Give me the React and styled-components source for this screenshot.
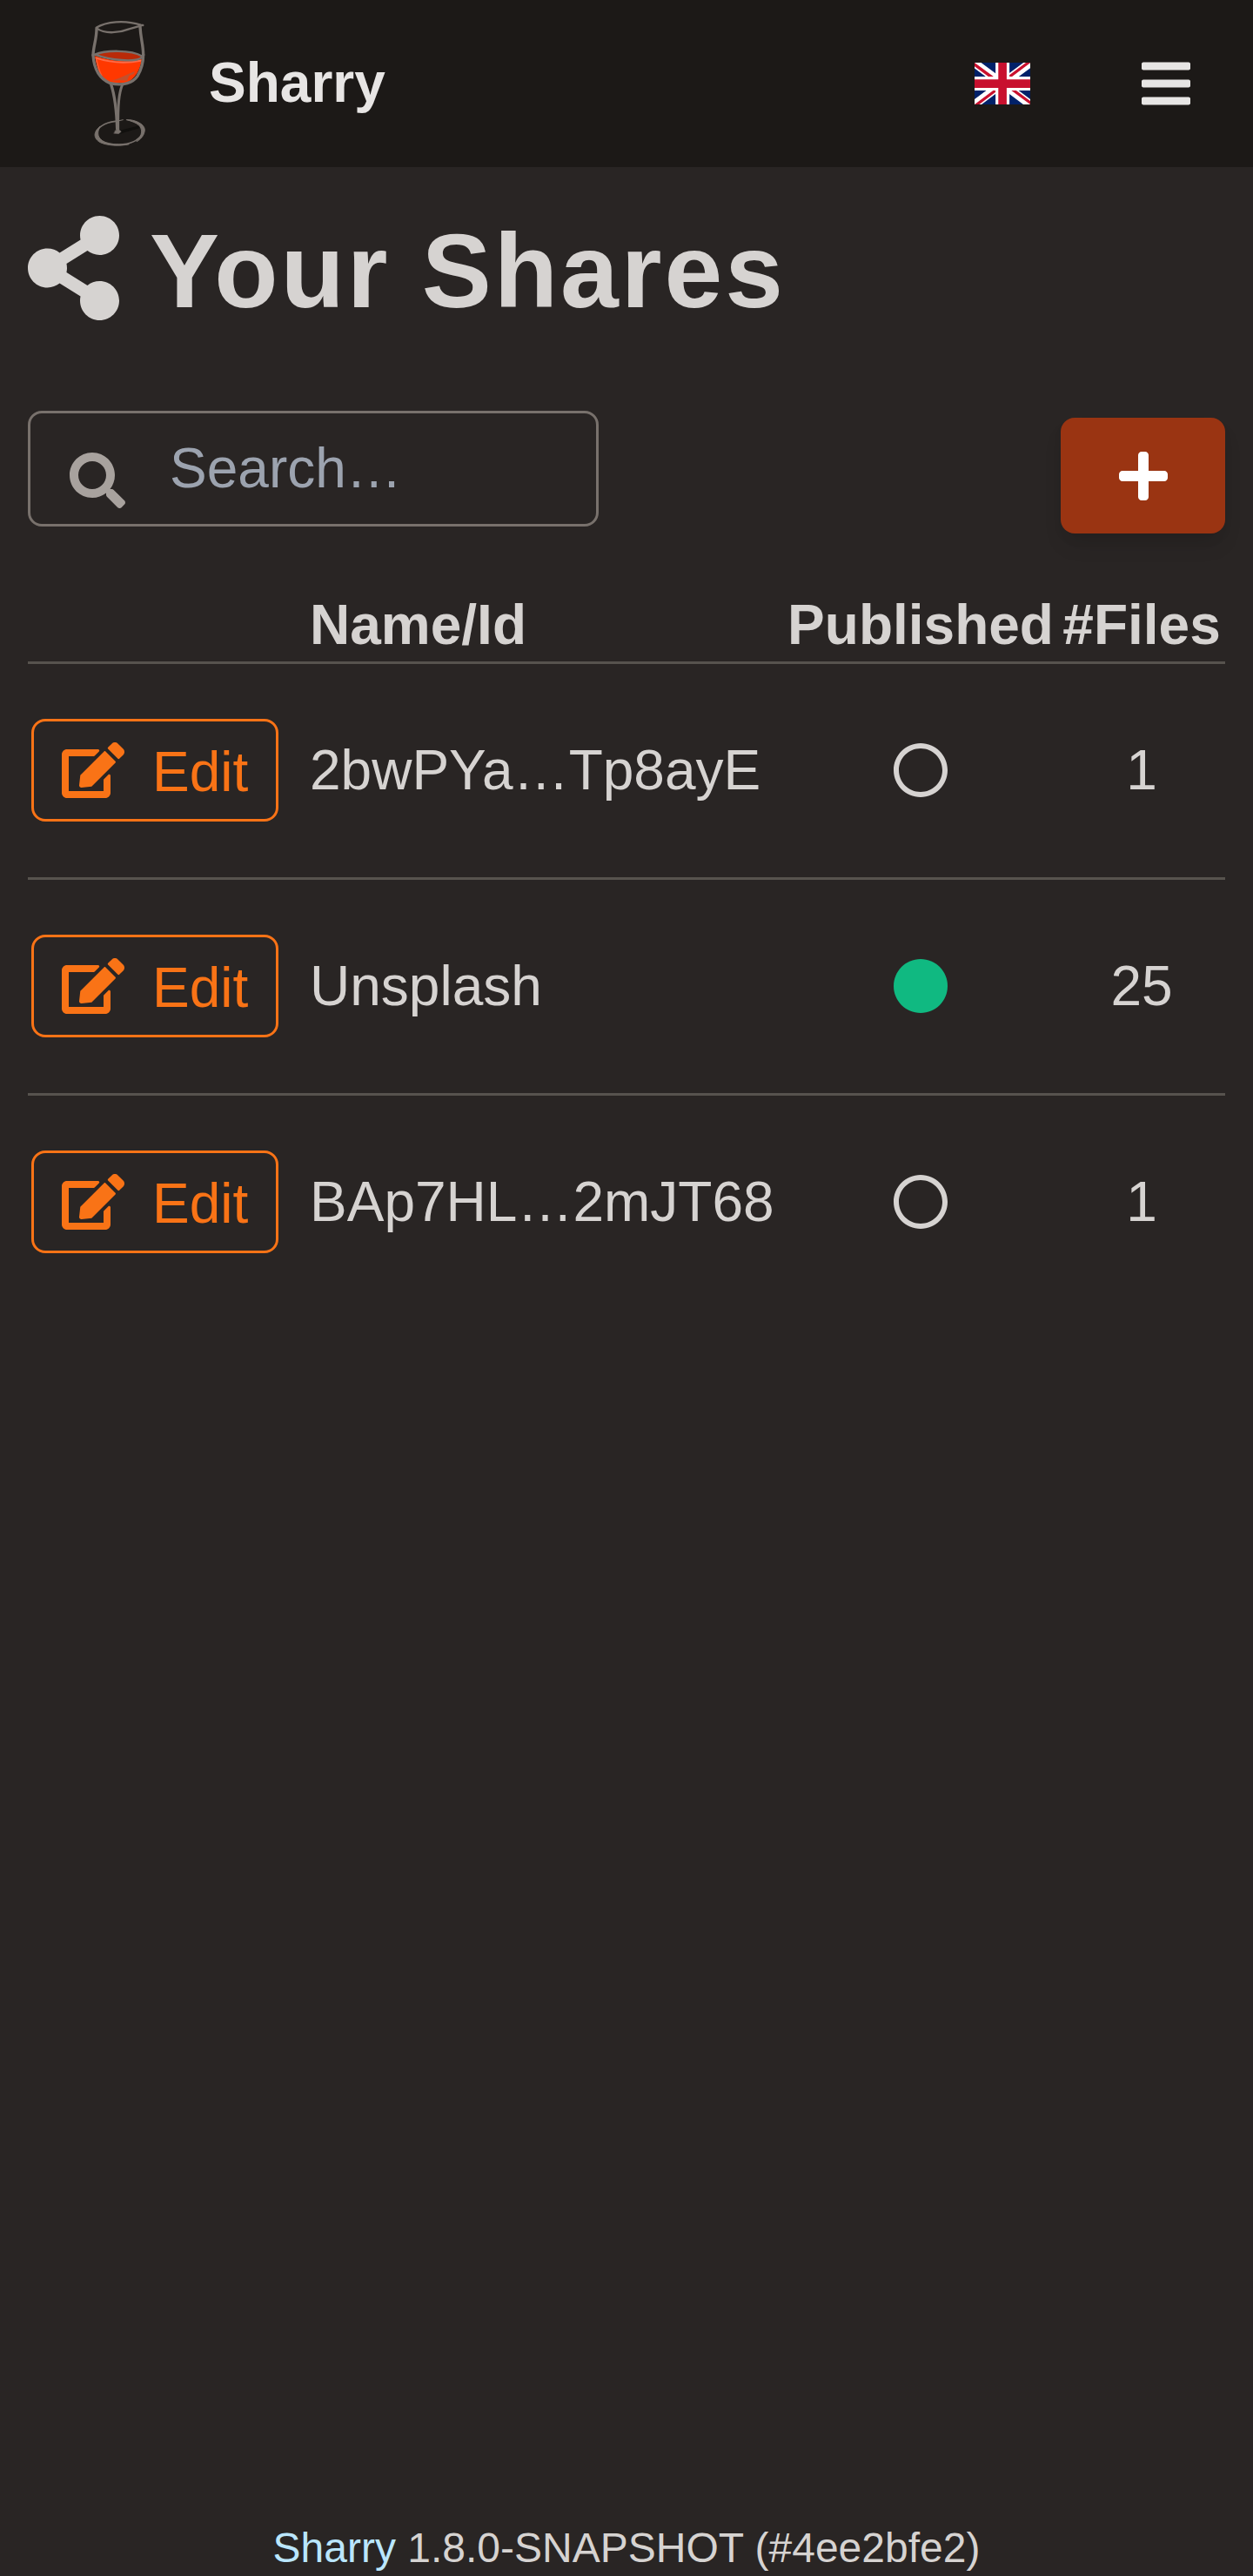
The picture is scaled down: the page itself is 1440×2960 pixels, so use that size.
import React from "react";
import styled, { createGlobalStyle } from "styled-components";
import { FaShareAlt, FaSearch, FaPlus, FaEdit, FaBars, FaRegCircle, FaCircle } from "react-icons/fa";

const GlobalStyle = createGlobalStyle`
  *, *::before, *::after { box-sizing: border-box; }
  body {
    margin: 0;
    background: #292524;
    color: #d6d3d1;
    font: 64px/96px "Liberation Sans", Arial, sans-serif;
  }
  svg { display: block; flex: none; }
`;

const Page = styled.div`
  display: flex;
  flex-direction: column;
  height: 2960px;
  overflow: hidden;
`;

const TopBar = styled.header`
  display: flex;
  align-items: center;
  flex: none;
  height: 192px;
  background: #1c1917;
  color: #e7e5e4;
`;

const Brand = styled.a`
  display: flex;
  align-items: center;
  flex: 1;
  padding-left: 96px;
  font-weight: 700;
`;

const BrandName = styled.span`
  margin-left: 64px;
  padding-bottom: 3px;
`;

const FlagButton = styled.a`
  display: flex;
  margin-right: 124px;
`;

const MenuButton = styled.a`
  display: flex;
  margin-right: 68px;
`;

const Content = styled.main`
  display: flex;
  flex-direction: column;
  flex: 1;
  padding: 48px 32px 0;
`;

const Title = styled.h1`
  display: flex;
  align-items: center;
  gap: 35px;
  margin: 0;
  height: 136px;
  font-size: 120px;
  line-height: 136px;
  letter-spacing: 3px;

  span { padding-top: 6px; }
`;

const Toolbar = styled.div`
  display: flex;
  align-items: flex-start;
  justify-content: space-between;
  margin-top: 96px;
`;

const SearchBox = styled.label`
  display: flex;
  width: 656px;
  height: 133px;
  padding: 15px 0 0 45px;
  border: 3px solid #78716c;
  border-radius: 16px;
  color: #a8a29e;

  svg { margin-top: 30px; }
`;

const SearchInput = styled.input`
  width: 440px;
  height: 96px;
  margin-left: 51px;
  padding: 0;
  border: 0;
  outline: 0;
  background: transparent;
  color: inherit;
  font: inherit;

  &::placeholder { color: #9ca3af; opacity: 1; }
`;

const AddButton = styled.button`
  display: flex;
  align-items: center;
  justify-content: center;
  width: 189px;
  height: 133px;
  margin-top: 8px;
  padding: 0;
  border: 0;
  border-radius: 16px;
  background: #9a3412;
  color: #fff;
  box-shadow: 0 16px 24px -4px rgba(0, 0, 0, 0.1), 0 8px 16px -4px rgba(0, 0, 0, 0.06);
`;

const Row = styled.div`
  display: grid;
  grid-template-columns: 324px 544px 316px 192px;
  align-items: center;
  height: 248px;
  padding-bottom: 1px;
  border-top: 3px solid #57534e;
`;

const HeadRow = styled(Row)`
  height: 84px;
  margin-top: 63px;
  padding: 0;
  border-top: 0;
  font-weight: 700;
  line-height: 84px;
`;

const Cell = styled.div`
  display: flex;
  justify-content: ${(p) => (p.$center ? "center" : "flex-start")};
  white-space: nowrap;
`;

const EditButton = styled.a`
  display: flex;
  align-items: center;
  width: 284px;
  height: 118px;
  margin-left: 4px;
  padding-left: 32px;
  border: 3px solid #f97316;
  border-radius: 16px;
  color: #f97316;

  span { margin: 3px 0 0 32px; }
`;

const Footer = styled.footer`
  flex: none;
  height: 64px;
  text-align: center;
  font-size: 48px;
  line-height: 64px;

  a { color: #bae6fd; }
`;

const Logo = () => (
  <svg width="80" height="160" viewBox="3 18 240 480" fill="none" stroke="#78716c" strokeLinecap="round" strokeLinejoin="round">
    <path d="M124 421 196 403 196 412 128 431z" fill="#11100e" stroke="none" />
    <path d="M42 162C50 212 62 240 98 257L150 255C182 244 200 206 204 173C150 186 86 178 42 162z" fill="#ff3800" stroke="none" />
    <path d="M46 170C95 186 150 189 200 179" stroke="#ff6b48" strokeWidth="6" />
    <path d="M47 172C52 200 58 217 65 230" stroke="#ff5b33" strokeWidth="5" />
    <path d="M99 248C128 240 152 226 180 215L176 225 160 232 153 248 128 247z" fill="#c4502c" stroke="none" />
    <path d="M42 158C76 143 166 140 206 164C202 176 172 180 133 177C98 175 66 167 42 158z" fill="#b92a08" strokeWidth="7" />
    <path d="M47 65C80 45 143 37 200 56L208 57" strokeWidth="7" />
    <path d="M48 67C78 90 130 82 160 70L202 58" strokeWidth="7" />
    <path d="M48 69C48 106 37 128 36 160" strokeWidth="10" />
    <path d="M36 160C39 207 55 240 95 257C141 267 174 255 189 232C204 207 209 186 209 158" strokeWidth="10" />
    <path d="M198 62C200 104 209 124 209 160" strokeWidth="10" />
    <path d="M98 261C112 304 117 350 119 415" strokeWidth="10" />
    <path d="M137 261C125 292 121 328 122 419" strokeWidth="9" />
    <path d="M113 388C72 393 50 411 48 430C47 455 82 468 120 468" strokeWidth="5" />
    <path d="M60 406C36 424 36 448 61 461C84 472 128 475 160 467C125 470 93 469 76 460C50 446 48 428 60 406z" fill="#78716c" strokeWidth="3" />
    <path d="M120 468C171 469 196 448 206 431" strokeWidth="5" />
    <path d="M152 383C178 381 214 397 214 418C213 437 199 451 186 458C208 434 207 414 192 400C182 392 169 388 152 383z" fill="#78716c" strokeWidth="3" />
    <path d="M113 388 126 386 139 383" strokeWidth="3" />
    <path d="M113 419 128 419 133 424 124 431 108 430z" fill="#78716c" strokeWidth="1" />
  </svg>
);

const Flag = () => (
  <svg width="64" height="48" viewBox="0 0 640 480">
    <path fill="#012169" d="M0 0h640v480H0z" />
    <path fill="#FFF" d="m75 0 244 181L562 0h78v62L400 241l240 178v61h-80L320 301 81 480H0v-60l239-178L0 64V0z" />
    <path fill="#C8102E" d="m424 281 216 159v40L369 281zm-184 20 6 35L54 480H0zM640 0v3L391 191l2-44L590 0zM0 0l239 176h-60L0 42z" />
    <path fill="#FFF" d="M241 0v480h160V0zM0 160v160h640V160z" />
    <path fill="#C8102E" d="M0 193v96h640v-96zM273 0v480h96V0z" />
  </svg>
);

const shares = [
  { name: "2bwPYa…Tp8ayE", published: false, files: 1 },
  { name: "Unsplash", published: true, files: 25 },
  { name: "BAp7HL…2mJT68", published: false, files: 1 },
];

const ShareIcon = styled(FaShareAlt)`
  width: 105px;
  height: 120px;
`;

export default function App() {
  return (
    <Page>
      <GlobalStyle />
      <TopBar>
        <Brand>
          <Logo />
          <BrandName>Sharry</BrandName>
        </Brand>
        <FlagButton><Flag /></FlagButton>
        <MenuButton><FaBars size={64} /></MenuButton>
      </TopBar>
      <Content>
        <Title>
          <ShareIcon />
          <span>Your Shares</span>
        </Title>
        <Toolbar>
          <SearchBox>
            <FaSearch size={64} />
            <SearchInput placeholder="Search…" />
          </SearchBox>
          <AddButton><FaPlus size={64} /></AddButton>
        </Toolbar>
        <HeadRow>
          <Cell />
          <Cell>Name/Id</Cell>
          <Cell $center>Published</Cell>
          <Cell $center>#Files</Cell>
        </HeadRow>
        {shares.map((s) => (
          <Row key={s.name}>
            <Cell>
              <EditButton><FaEdit size={72} /><span>Edit</span></EditButton>
            </Cell>
            <Cell>{s.name}</Cell>
            <Cell $center>
              {s.published ? <FaCircle size={64} color="#10b981" /> : <FaRegCircle size={64} />}
            </Cell>
            <Cell $center>{s.files}</Cell>
          </Row>
        ))}
      </Content>
      <Footer><a>Sharry</a> 1.8.0-SNAPSHOT (#4ee2bfe2)</Footer>
    </Page>
  );
}
